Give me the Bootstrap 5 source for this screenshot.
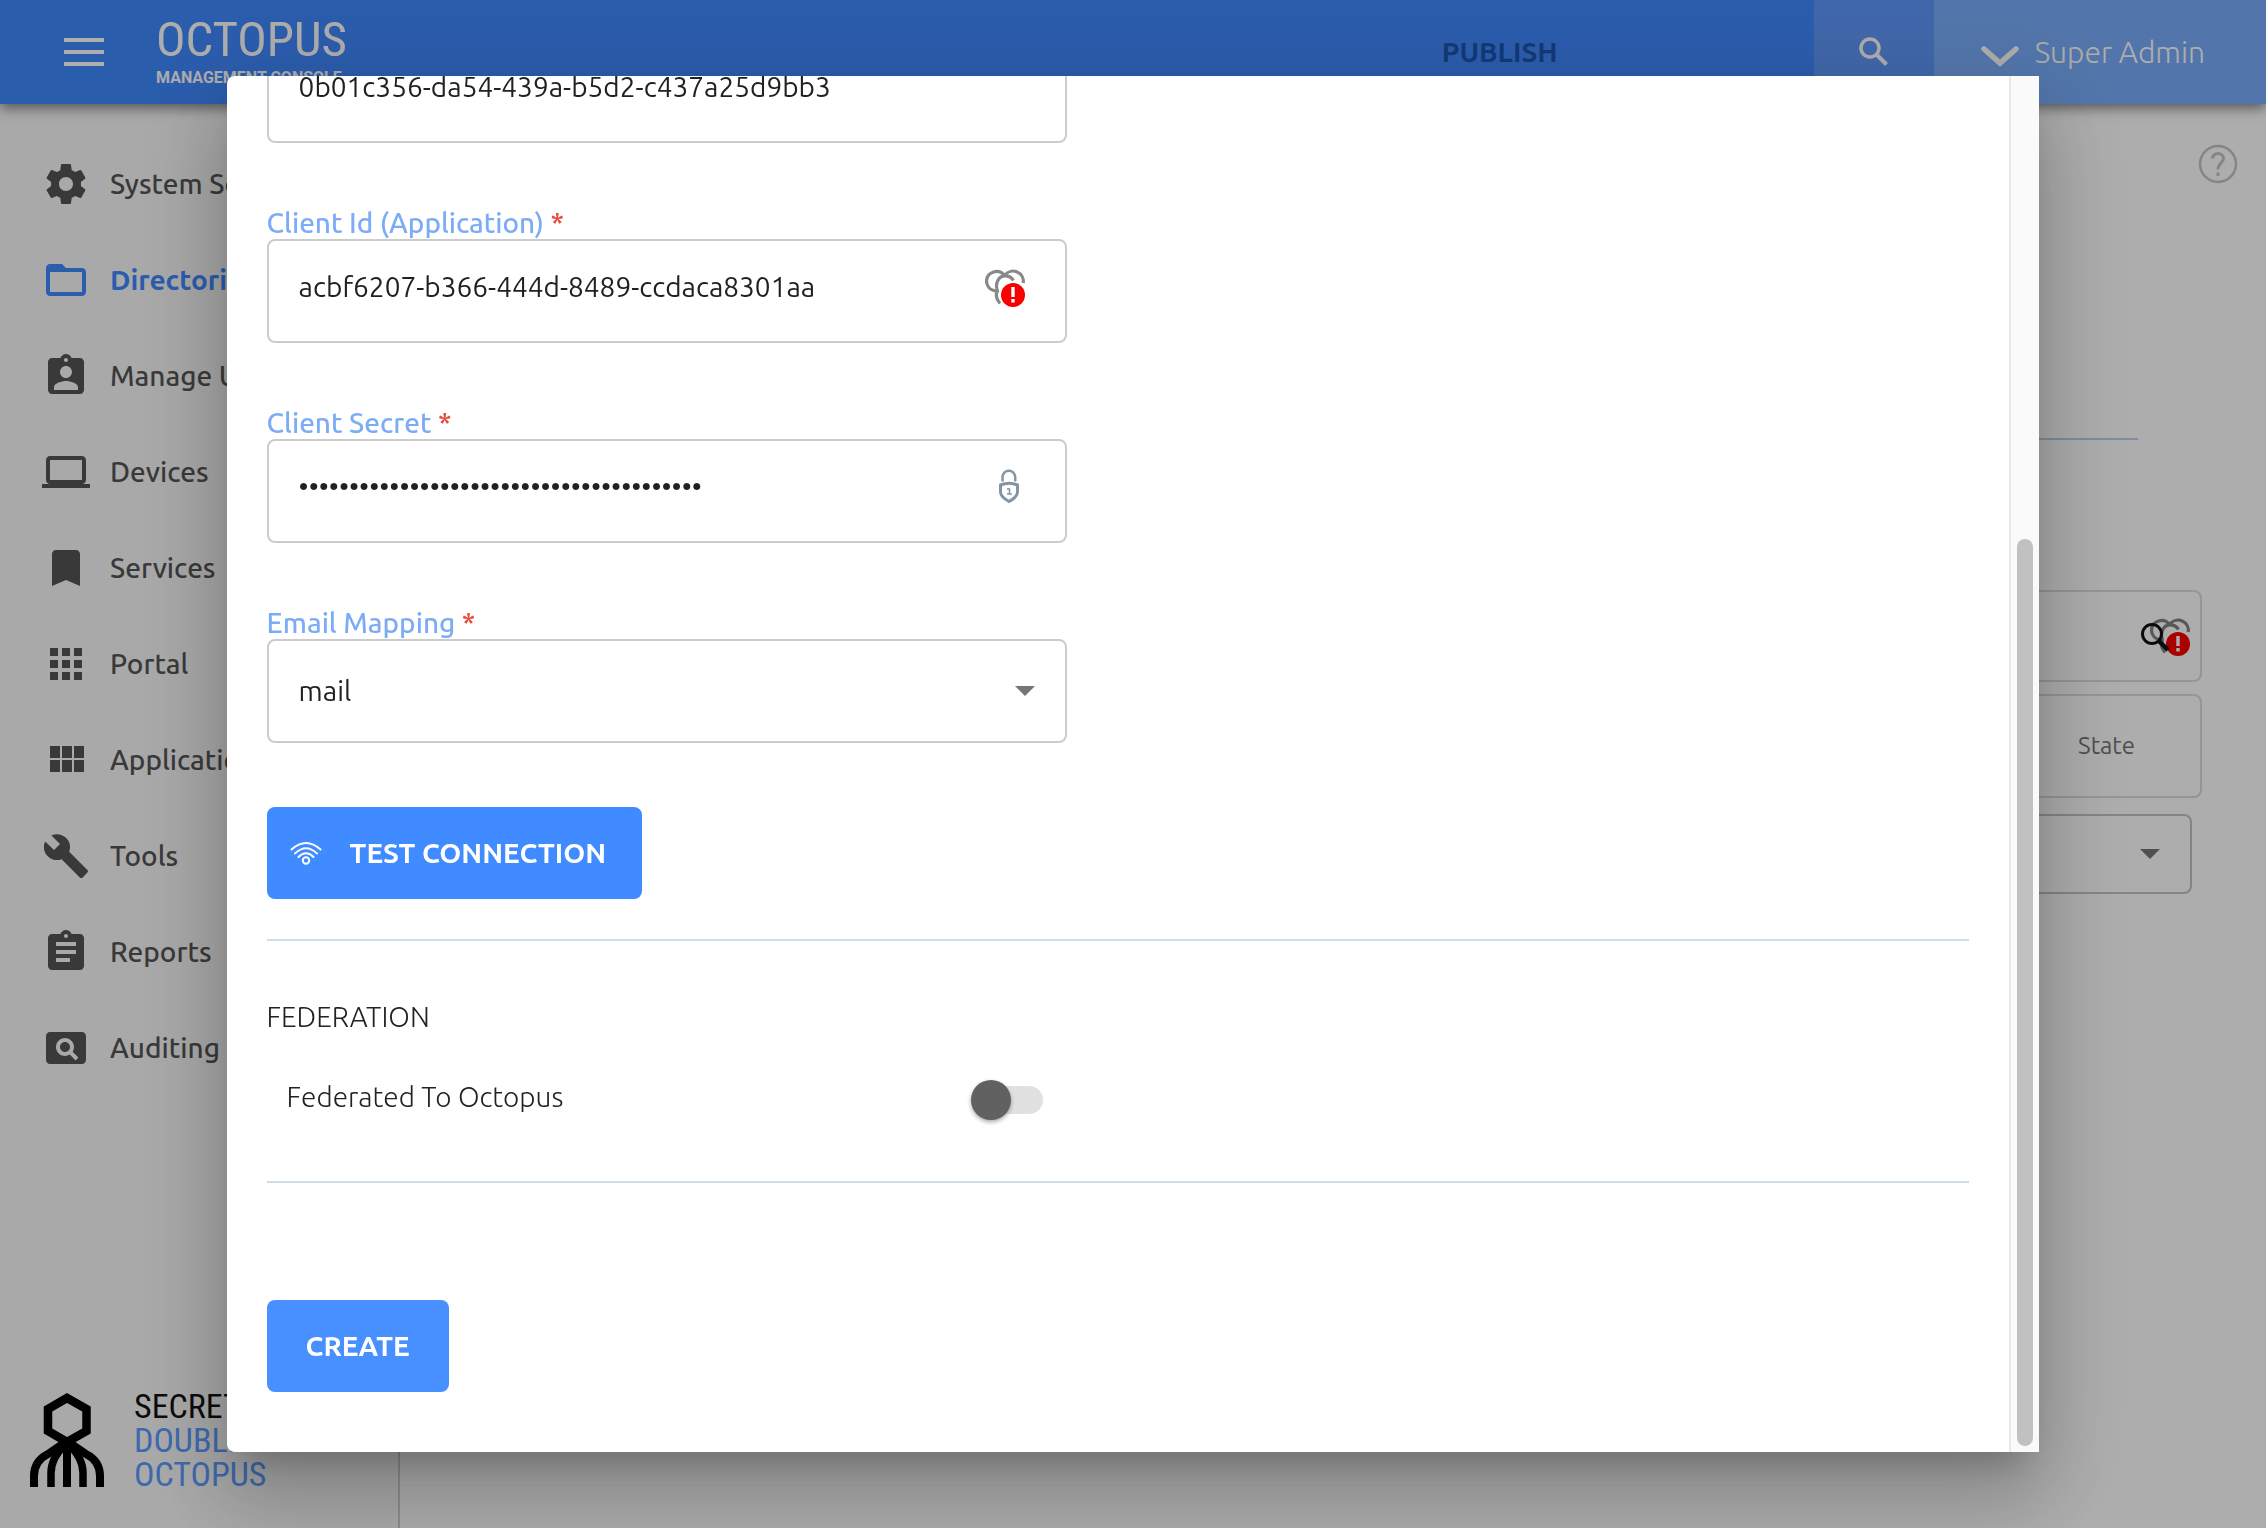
<!DOCTYPE html>
<html lang="en">
<head>
<meta charset="utf-8">
<meta name="viewport" content="width=device-width, initial-scale=1">
<title>Octopus Management Console</title>
<link href="https://cdn.jsdelivr.net/npm/bootstrap@5.3.0/dist/css/bootstrap.min.css" rel="stylesheet">
<style>
  :root { --brand: #4089ff; --line: #cfdde8; }
  body { font-family: "Ubuntu", "Noto Sans", sans-serif; font-size: 28px; line-height: 40px; color: #212121; background: #fff; }

  /* Top bar */
  .topbar { height: 104px; background: var(--brand); box-shadow: 0 4px 12px rgba(0,0,0,.5); z-index: 2; }
  .menu-btn { padding: 32px 40px 32px 52px; line-height: 0; color: #fff; background: none; border: 0; }
  .brand-block { padding-top: 12px; color: #fff; font-family: "Roboto Condensed", "Roboto", sans-serif; }
  .brand-name { font-size: 49px; line-height: 56px; }
  .brand-sub { font-family: "Roboto", sans-serif; font-weight: 700; font-size: 16px; line-height: 20px; }
  .publish-btn { font-weight: 700; color: #1c55b0; background: none; border: 0; padding: 0 256px 0 0; }
  .search-btn { width: 120px; background: #6099fc; color: #fff; border: 0; line-height: 0; }
  .admin-btn { background: #7aaffd; color: #fff; border: 0; font-size: 30px; font-weight: 300; padding: 0 61px 0 47px; }

  /* Sidebar */
  .sidebar { width: 400px; background: #f9f9f9; border-right: 2px solid #d0d0d0; }
  .side-link { height: 96px; padding-left: 42px; color: #555; font-weight: 500; text-decoration: none; white-space: nowrap; }
  .side-link.current { color: var(--brand); font-weight: 700; }
  .side-link svg { width: 48px; height: 48px; fill: currentColor; margin-right: 20px; flex: none; }
  .side-logo { padding: 0 0 37px 30px; gap: 29px; font-family: "Roboto Condensed", "Roboto", sans-serif; font-size: 34px; line-height: 34px; color: #111; }
  .side-logo .blue { color: #5c9bff; }

  /* Page behind the dialog */
  .help-btn { margin: 40px 28px 0 0; padding: 0; border: 0; background: none; line-height: 0; color: #c4c4c4; }
  .page-rule { height: 2px; margin: 254px 128px 0 80px; background: #bcd0ec; }
  .panel-box { border: 2px solid #dcdcdc; border-radius: 8px; margin: 0 64px 0 80px; }
  .find-box { height: 92px; margin-top: 150px; }
  .find-box input { border: 0; background: none; outline: 0; width: 100%; }
  .find-icons { top: 26px; right: 10px; line-height: 0; }
  .head-box { height: 104px; margin-top: 12px; padding-right: 65px; font-size: 24px; color: #757575; }
  .state-select { height: 80px; margin: 16px 74px 0 80px; border: 2px solid #c4c4c4; border-radius: 8px; }

  .modal-backdrop { opacity: .32; }

  /* Dialog */
  .modal-sheet { width: 80vw; height: 90vh; max-width: none; margin: 5vh auto; border-radius: 8px 0 0 8px;
    box-shadow: 0 22px 30px -14px rgba(0,0,0,.2), 0 48px 76px 6px rgba(0,0,0,.14), 0 18px 92px 16px rgba(0,0,0,.12); }
  .modal-sheet .modal-content { height: 100%; border: 0; border-radius: 8px 0 0 8px; overflow: hidden; flex-direction: row; background: transparent; }
  .sheet-body { background: #fff; padding: 0 40px 60px; overflow: hidden; }
  .sheet-scroll { width: 30px; padding: 463px 6px 6px; background: #fafafa; border-left: 2px solid #e8e8e8; flex: none; }
  .sheet-thumb { width: 16px; height: 100%; border-radius: 8px; background: #c1c1c1; }

  .form-col { width: 800px; max-width: 100%; }
  .entry { margin-bottom: 64px; flex: none; }
  .entry label { display: block; line-height: 32px; font-weight: 500; color: #7cacf5; }
  .entry label span { color: #e8483a; }
  .entry .form-control, .entry .form-select, .state-select { font-size: 28px; color: #212121; background-color: #fff; box-shadow: none; }
  .entry .form-control, .entry .form-select { height: 104px; border: 2px solid #ccc; border-radius: 8px; padding: 0 100px 8px 30px; }
  .entry .form-select, .state-select { background-image: url("data:image/svg+xml,%3Csvg xmlns='http://www.w3.org/2000/svg' viewBox='0 0 20 10'%3E%3Cpath d='M0 0h20L10 10z' fill='%23757575'/%3E%3C/svg%3E"); background-size: 20px 10px; background-position: right 30px center; }
  .entry .form-select { padding-bottom: 0; }
  .entry-icon { line-height: 0; top: 28px; right: 40px; }

  .act-btn { height: 92px; border: 0; border-radius: 8px; background: #3f8bff; color: #fff; font-size: 28px; font-weight: 700; line-height: 40px; align-self: flex-start; flex: none; }
  .test-btn { padding: 0 36px 0 22px; gap: 27px; }
  .create-btn { padding: 0 39px; background: #488fff; margin-top: 117px; }
  .sheet-rule { height: 2px; background: var(--line); flex: none; }
  .test-btn + .sheet-rule { margin-top: 40px; }
  .fed-title { margin: 56px 0 40px; font-size: 28px; line-height: 40px; font-weight: 300; color: #222; flex: none; }
  .fed-row { height: 44px; padding: 0 24px 0 20px; margin: 0 0 60px; font-weight: 300; color: #222; flex: none; }
  .fed-row .form-check-input { width: 70px; height: 28px; margin: 9px 0 0; border: 0; border-radius: 14px; background: #e1e1e1; box-shadow: none; position: relative; }
  .fed-row .form-check-input::before { content: ""; position: absolute; left: -2px; top: -6px; width: 40px; height: 40px; border-radius: 50%; background: #616161; box-shadow: 0 2px 4px rgba(0,0,0,.35); }
</style>
</head>
<body>
<svg class="d-none">
  <symbol id="clouds" viewBox="0 0 40 38">
    <path d="M11 22C4 21 1.500 16 1.500 12A10 10 0 0 1 19.500 6.500M20 6A10.300 10.300 0 0 1 38.200 14" fill="none" stroke="currentColor" stroke-width="3.200"/>
    <path d="M15 34.500C10 29 11 24 12.500 22C9.500 14 14 6.800 20 6.800C24 6.800 27 9 28.500 11.500" fill="none" stroke="currentColor" stroke-width="3.200"/>
    <circle cx="28" cy="26" r="12" fill="#fa0000"/>
    <path d="M26.300 18h3.400v10h-3.400zM26.300 30h3.400v3.400h-3.400z" fill="#fff"/>
  </symbol>
</svg>

<div class="d-flex flex-column vh-100 overflow-hidden">
  <header class="topbar d-flex align-items-stretch position-relative">
    <button class="menu-btn" aria-label="Menu">
      <svg width="64" height="40" viewBox="0 0 64 40"><path d="M12 8h40M12 20h40M12 32h40" stroke="currentColor" stroke-width="4"/></svg>
    </button>
    <div class="brand-block d-flex flex-column">
      <span class="brand-name">OCTOPUS</span>
      <span class="brand-sub">MANAGEMENT CONSOLE</span>
    </div>
    <button class="publish-btn ms-auto">PUBLISH</button>
    <button class="search-btn" aria-label="Search">
      <svg width="32" height="32" viewBox="0 0 32 32" fill="none" stroke="currentColor"><circle cx="12" cy="12" r="9" stroke-width="3.500"/><path d="M18.500 18.500l10 10" stroke-width="4"/></svg>
    </button>
    <button class="admin-btn d-flex align-items-center">
      <svg class="mt-2 me-3" width="38" height="22" viewBox="0 0 38 22"><path d="M3 4l16 14L35 4" fill="none" stroke="currentColor" stroke-width="5.500" stroke-linecap="round"/></svg>
      Super Admin
    </button>
  </header>

  <div class="d-flex flex-grow-1">
    <nav class="sidebar d-flex flex-column flex-shrink-0">
      <div class="pt-4 mt-2">
        <a href="#" class="side-link d-flex align-items-center"><svg viewBox="0 0 24 24"><path d="M19.430 12.980c.04-.32.07-.64.07-.98s-.03-.66-.07-.98l2.110-1.650c.19-.15.24-.42.12-.64l-2-3.460c-.12-.22-.39-.3-.61-.22l-2.490 1c-.52-.4-1.080-.73-1.690-.98l-.38-2.650A.488.488 0 0 0 14 2h-4c-.25 0-.46.180-.49.420l-.38 2.650c-.61.25-1.170.59-1.690.98l-2.490-1c-.23-.09-.49 0-.61.22l-2 3.460c-.13.22-.07.49.12.640l2.110 1.650c-.04.32-.07.65-.07.980s.03.66.07.980l-2.110 1.650c-.19.15-.24.42-.12.640l2 3.460c.12.22.39.3.61.220l2.490-1c.52.4 1.080.73 1.690.980l.38 2.650c.03.24.24.420.49.420h4c.25 0 .46-.18.49-.42l.38-2.650c.61-.25 1.170-.59 1.690-.98l2.490 1c.23.09.49 0 .61-.22l2-3.460c.12-.22.07-.49-.12-.64l-2.110-1.650zM12 15.500c-1.930 0-3.500-1.570-3.500-3.500s1.570-3.500 3.500-3.500 3.500 1.570 3.500 3.500-1.570 3.500-3.500 3.500z"/></svg>System Settings</a>
        <a href="#" class="side-link current d-flex align-items-center"><svg viewBox="0 0 24 24"><path d="M20 6h-8l-2-2H4c-1.100 0-1.990.9-1.990 2L2 18c0 1.100.9 2 2 2h16c1.100 0 2-.9 2-2V8c0-1.100-.9-2-2-2zm0 12H4V8h16v10z"/></svg>Directories</a>
        <a href="#" class="side-link d-flex align-items-center"><svg viewBox="0 0 24 24"><path d="M19 3h-4.180C14.400 1.840 13.300 1 12 1c-1.300 0-2.400.84-2.820 2H5c-1.100 0-2 .9-2 2v14c0 1.100.9 2 2 2h14c1.100 0 2-.9 2-2V5c0-1.100-.9-2-2-2zm-7 0c.55 0 1 .45 1 1s-.45 1-1 1-1-.45-1-1 .45-1 1-1zm0 4c1.660 0 3 1.340 3 3s-1.340 3-3 3-3-1.340-3-3 1.340-3 3-3zm6 12H6v-1.400c0-2 4-3.100 6-3.100s6 1.100 6 3.100V19z"/></svg>Manage Users</a>
        <a href="#" class="side-link d-flex align-items-center"><svg viewBox="0 0 24 24"><path d="M20 18c1.100 0 1.990-.9 1.990-2L22 6c0-1.100-.9-2-2-2H4c-1.100 0-2 .9-2 2v10c0 1.100.9 2 2 2H0v2h24v-2h-4zM4 6h16v10H4V6z"/></svg>Devices</a>
        <a href="#" class="side-link d-flex align-items-center"><svg viewBox="0 0 24 24"><path d="M17 3H7c-1.100 0-2 .9-2 2v16l7-3 7 3V5c0-1.100-.9-2-2-2z"/></svg>Services</a>
        <a href="#" class="side-link d-flex align-items-center"><svg viewBox="0 0 24 24"><path d="M4 8h4V4H4v4zm6 12h4v-4h-4v4zm-6 0h4v-4H4v4zm0-6h4v-4H4v4zm6 0h4v-4h-4v4zm6-10v4h4V4h-4zm-6 4h4V4h-4v4zm6 6h4v-4h-4v4zm0 6h4v-4h-4v4z"/></svg>Portal</a>
        <a href="#" class="side-link d-flex align-items-center"><svg viewBox="0 0 24 24"><path d="M4 11h5V5H4v6zm0 7h5v-6H4v6zm6 0h5v-6h-5v6zm6 0h5v-6h-5v6zm-6-7h5V5h-5v6zm6-6v6h5V5h-5z"/></svg>Applications</a>
        <a href="#" class="side-link d-flex align-items-center"><svg viewBox="0 0 24 24"><path d="M22.700 19l-9.100-9.100c.9-2.300.4-5-1.500-6.900-2-2-5-2.400-7.400-1.300L9 6 6 9 1.600 4.700C.4 7.100.9 10.100 2.900 12.100c1.900 1.900 4.600 2.400 6.900 1.500l9.100 9.100c.4.4 1 .4 1.400 0l2.300-2.300c.5-.4.5-1.100.1-1.400z"/></svg>Tools</a>
        <a href="#" class="side-link d-flex align-items-center"><svg viewBox="0 0 24 24"><path d="M19 3h-4.180C14.400 1.840 13.300 1 12 1c-1.300 0-2.400.84-2.820 2H5c-1.100 0-2 .9-2 2v14c0 1.100.9 2 2 2h14c1.100 0 2-.9 2-2V5c0-1.100-.9-2-2-2zm-7 0c.55 0 1 .45 1 1s-.45 1-1 1-1-.45-1-1 .45-1 1-1zm2 14H7v-2h7v2zm3-4H7v-2h10v2zm0-4H7V7h10v2z"/></svg>Reports</a>
        <a href="#" class="side-link d-flex align-items-center"><svg viewBox="0 0 24 24"><path d="M11.500 9C10.120 9 9 10.120 9 11.500s1.120 2.500 2.500 2.500 2.500-1.120 2.500-2.500S12.880 9 11.500 9zM20 4H4c-1.100 0-2 .9-2 2v12c0 1.100.9 2 2 2h16c1.100 0 2-.9 2-2V6c0-1.100-.9-2-2-2zm-3.210 14.210l-2.910-2.910c-.69.44-1.510.7-2.390.7C9.010 16 7 13.990 7 11.500S9.010 7 11.500 7 16 9.010 16 11.500c0 .88-.26 1.690-.7 2.390l2.910 2.900-1.420 1.420z"/></svg>Auditing</a>
      </div>
      <div class="side-logo d-flex align-items-center mt-auto">
        <svg width="75" height="94" viewBox="0 0 75 94" fill="none" stroke="#000">
          <path d="M37 5L56.500 16V38L37 49L18 38V16Z" stroke-width="8.500"/>
          <path d="M37 48v46M40 50L56 61Q70 68 70 83V94M34 50L18 61Q4 68 4 83V94" stroke-width="8"/>
          <path d="M39 52Q53 65 53 80V94M35 52Q21 65 21 80V94" stroke-width="7.500"/>
        </svg>
        <div>SECRET<br><span class="blue">DOUBLE<br>OCTOPUS</span></div>
      </div>
    </nav>

    <main class="flex-grow-1 d-flex flex-column">
      <button class="help-btn align-self-end" aria-label="Help">
        <svg width="40" height="40" viewBox="0 0 40 40" fill="none" stroke="currentColor"><circle cx="20" cy="20" r="18" stroke-width="2.500"/><path d="M14.500 14.500C15 7.500 25.500 8 25.500 14.500C25.500 19 20 19 20 25.500M20 28.500v3.500" stroke-width="3"/></svg>
      </button>
      <div class="page-rule"></div>
      <div class="panel-box find-box position-relative d-flex">
        <input type="text" aria-label="Search directories">
        <span class="find-icons position-absolute"><svg width="50" height="40" viewBox="0 0 50 40"><use href="#clouds" x="10" width="40" height="38" color="#828282"/><g fill="none" stroke="#111"><circle cx="12" cy="16" r="9.500" stroke-width="3"/><path d="M19 23l9 9" stroke-width="4.500"/></g></svg></span>
      </div>
      <div class="panel-box head-box d-flex align-items-center justify-content-end">State</div>
      <select class="form-select state-select w-auto" aria-label="Page size"><option></option></select>
    </main>
  </div>
</div>

<div class="modal-backdrop"></div>

<div class="modal d-block overflow-hidden" role="dialog" aria-modal="true">
  <div class="modal-dialog modal-sheet">
    <div class="modal-content">
      <form class="sheet-body d-flex flex-column justify-content-end flex-grow-1">
        <div class="entry form-col">
          <label for="tenant">Tenant Id <span>*</span></label>
          <input id="tenant" class="form-control" type="text" value="0b01c356-da54-439a-b5d2-c437a25d9bb3">
        </div>
        <div class="entry form-col">
          <label for="client">Client Id (Application) <span>*</span></label>
          <div class="position-relative">
            <input id="client" class="form-control" type="text" value="acbf6207-b366-444d-8489-ccdaca8301aa">
            <span class="entry-icon position-absolute"><svg width="44" height="42" viewBox="-2 -2 44 42"><use href="#clouds" width="40" height="38" color="#888"/></svg></span>
          </div>
        </div>
        <div class="entry form-col">
          <label for="secret">Client Secret <span>*</span></label>
          <div class="position-relative">
            <input id="secret" class="form-control" type="password" value="0123456789012345678901234567890123456789">
            <span class="entry-icon position-absolute"><svg width="36" height="42" viewBox="0 0 36 42" fill="none" stroke="#8594a4"><path d="M11.500 14.500V10A6.300 6.300 0 0 1 24.200 10V14.500" stroke-width="2.500"/><path d="M9.500 18Q18 14.500 26.500 18V25C26.500 29.500 22.500 32 18 34.500C13.500 32 9.500 29.500 9.500 25Z" stroke-width="3"/><path d="M16 22h2.500v5M16 27h5" stroke-width="1.500"/></svg></span>
          </div>
        </div>
        <div class="entry form-col">
          <label for="mapping">Email Mapping <span>*</span></label>
          <select id="mapping" class="form-select"><option>mail</option></select>
        </div>
        <button type="button" class="act-btn test-btn d-flex align-items-center">
          <svg width="34" height="28" viewBox="0 0 34 28" fill="none" stroke="currentColor" stroke-width="2" stroke-linecap="round"><path d="M2.500 10.500Q17-2.500 31.500 10.500M6 14.500Q17 4 28 14.500M9.500 18Q17 10.500 24.500 18"/><circle cx="17" cy="21.500" r="3.200"/></svg>
          TEST CONNECTION
        </button>
        <div class="sheet-rule"></div>
        <h2 class="fed-title">FEDERATION</h2>
        <div class="fed-row form-col d-flex justify-content-between align-items-start">
          <label for="federated">Federated To Octopus</label>
          <input id="federated" class="form-check-input" type="checkbox" role="switch">
        </div>
        <div class="sheet-rule"></div>
        <button type="button" class="act-btn create-btn">CREATE</button>
      </form>
      <div class="sheet-scroll"><div class="sheet-thumb"></div></div>
    </div>
  </div>
</div>
<script src="https://cdn.jsdelivr.net/npm/bootstrap@5.3.0/dist/js/bootstrap.bundle.min.js"></script>
</body>
</html>
